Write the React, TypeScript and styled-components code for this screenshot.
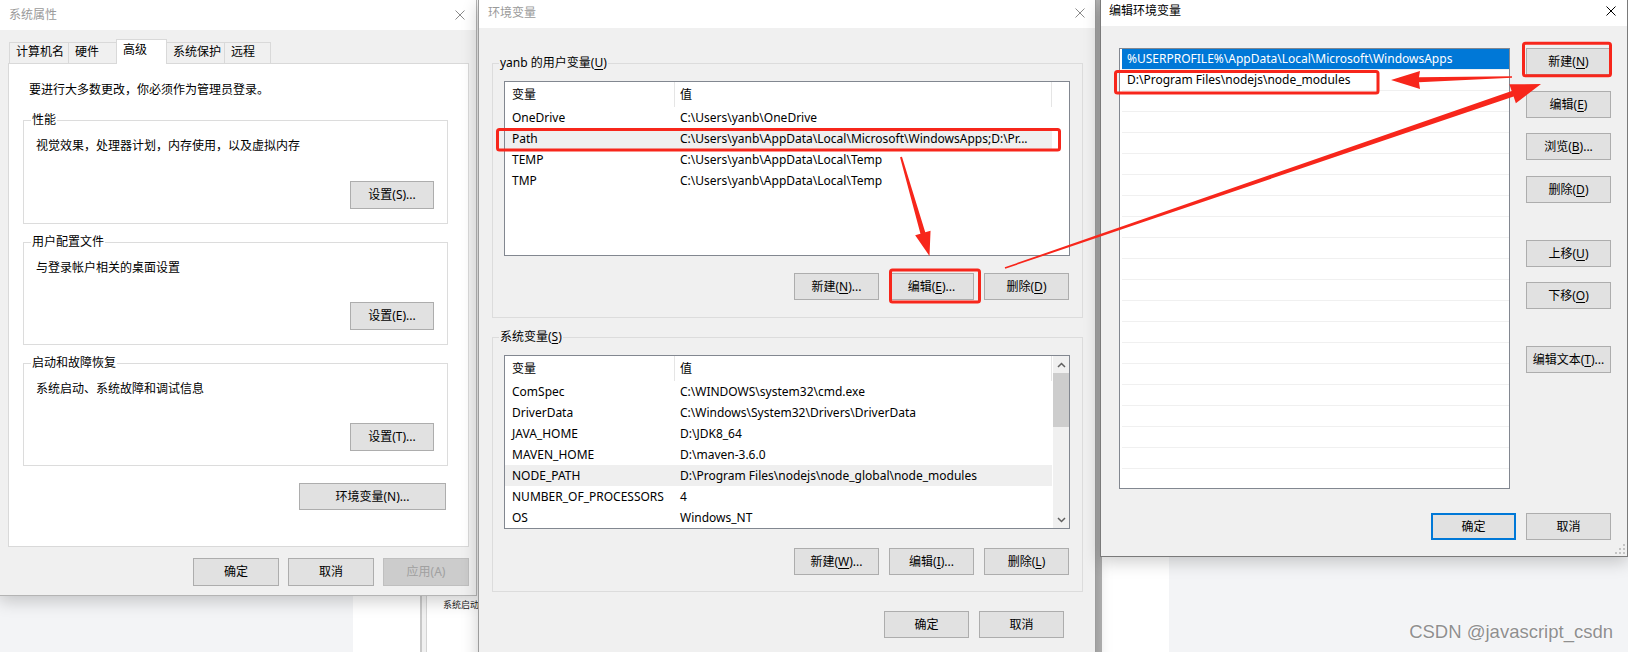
import styled, { createGlobalStyle, css } from 'styled-components';

const RED = '#f7261b';

const GlobalStyle = createGlobalStyle`
    html, body {
        margin: 0;
        padding: 0;
        background: #f3f4f6;
    }
    body {
        font-family: "Noto Sans", "Noto Sans CJK SC", sans-serif;
        font-size: 12px;
        color: #000;
    }
    *, *::before, *::after {
        box-sizing: border-box;
    }
`;

const Desktop = styled.div`
    position: relative;
    width: 1628px;
    height: 652px;
    overflow: hidden;
    background: #f3f4f6;
`;

// window lying behind the dialogs, only its edges show
const BackWindow = styled.div`
    position: absolute;
    left: 353px;
    top: 0;
    width: 816px;
    height: 652px;
    display: flex;
    background: #fff;
`;
const BackPane = styled.div<{ $w: number; $bg: string }>`
    flex: 0 0 ${(p) => p.$w}px;
    background: ${(p) => p.$bg};
`;
const BackContent = styled.div`
    flex: 1;
    display: flex;
    flex-direction: column;
    justify-content: flex-end;
    padding: 0 0 41px 16px;
    font-size: 9px;
    line-height: 12px;
    color: #222;
`;

const Window = styled.div<{ $x: number; $w: number; $h: number; $z: number; $edge: string }>`
    position: absolute;
    top: 0;
    left: ${(p) => p.$x}px;
    width: ${(p) => p.$w}px;
    height: ${(p) => p.$h}px;
    z-index: ${(p) => p.$z};
    display: flex;
    flex-direction: column;
    background: #f0f0f0;
    border: 1px solid ${(p) => p.$edge};
    border-top: none;
    box-shadow: 0 5px 16px rgba(0, 0, 0, 0.2);
`;

const TitleBar = styled.div<{ $h: number; $padL: number; $padR: number; $lift?: number; $active?: boolean }>`
    flex: none;
    height: ${(p) => p.$h}px;
    display: flex;
    align-items: center;
    justify-content: space-between;
    padding: 0 ${(p) => p.$padR}px ${(p) => p.$lift || 0}px ${(p) => p.$padL}px;
    background: #fff;
    color: ${(p) => (p.$active ? '#000' : '#9a9a9a')};
    line-height: 16px;
`;

const Key = styled.span`
    text-decoration: underline;
    text-underline-offset: 2px;
`;

const Btn = styled.button<{ $w: number; $h: number; $mt?: number; $kind?: 'default' | 'disabled' }>`
    flex: none;
    width: ${(p) => p.$w}px;
    height: ${(p) => p.$h}px;
    margin: ${(p) => p.$mt || 0}px 0 0 0;
    padding: 0;
    display: flex;
    align-items: center;
    justify-content: center;
    font: inherit;
    line-height: 16px;
    white-space: nowrap;
    color: #000;
    background: #e1e1e1;
    border: 1px solid #adadad;
    ${(p) =>
        p.$kind === 'default' &&
        css`
            border: 2px solid #0078d7;
        `}
    ${(p) =>
        p.$kind === 'disabled' &&
        css`
            color: #a0a0a0;
            background: #cccccc;
            border-color: #bfbfbf;
        `}
`;

/* ---------- 系统属性 ---------- */

const SysBody = styled.div`
    flex: 1;
    display: flex;
    flex-direction: column;
    padding: 9px 7px 9px 8px;
`;
const TabStrip = styled.div`
    flex: none;
    display: flex;
    align-items: flex-end;
    height: 25px;
    margin: 0 0 -1px 2px;
    position: relative;
    z-index: 1;
`;
const Tab = styled.div<{ $w: number; $on?: boolean }>`
    width: ${(p) => p.$w}px;
    height: ${(p) => (p.$on ? 25 : 22)}px;
    margin-left: -1px;
    padding: ${(p) => (p.$on ? 2 : 1)}px 0 0 6px;
    line-height: 16px;
    background: ${(p) => (p.$on ? '#fff' : '#f0f0f0')};
    border: 1px solid #d9d9d9;
    border-bottom: ${(p) => (p.$on ? 'none' : '1px solid #d9d9d9')};
`;
const TabPanel = styled.div`
    flex: none;
    height: 484px;
    display: flex;
    flex-direction: column;
    padding: 18px 20px 0 14px;
    background: #fff;
    border: 1px solid #d9d9d9;
`;
const Notice = styled.div`
    padding-left: 6px;
    line-height: 16px;
`;
const Group = styled.div<{ $h: number; $mt: number; $pad: string }>`
    flex: none;
    height: ${(p) => p.$h}px;
    margin-top: ${(p) => p.$mt}px;
    display: flex;
    flex-direction: column;
    padding: ${(p) => p.$pad};
    border: 1px solid #dcdcdc;
`;
const Legend = styled.div<{ $bg: string }>`
    align-self: flex-start;
    margin: -9px 0 0 -5px;
    padding: 0 1px;
    line-height: 16px;
    background: ${(p) => p.$bg};
`;
const GroupText = styled.div`
    margin-top: 10px;
    line-height: 16px;
`;
const GroupAction = styled.div`
    margin-top: auto;
    display: flex;
    justify-content: flex-end;
`;
const EnvRow = styled.div`
    margin-top: 17px;
    display: flex;
    justify-content: flex-end;
    padding-right: 2px;
`;
const Footer = styled.div<{ $mt: number; $mr: number; $gap: number }>`
    flex: none;
    margin: ${(p) => p.$mt}px ${(p) => p.$mr}px 0 0;
    display: flex;
    justify-content: flex-end;
    gap: ${(p) => p.$gap}px;
`;

/* ---------- 环境变量 ---------- */

const EnvBody = styled.div`
    flex: 1;
    display: flex;
    flex-direction: column;
    padding: 35px 12px 0 13px;
`;
const ListBox = styled.div<{ $h: number }>`
    flex: none;
    height: ${(p) => p.$h}px;
    margin-top: 10px;
    display: flex;
    overflow: hidden;
    background: #fff;
    border: 1px solid #828790;
`;
const ListMain = styled.div`
    width: 547px;
    display: flex;
    flex-direction: column;
`;
const Row = styled.div<{ $head?: boolean; $hot?: boolean }>`
    flex: none;
    display: flex;
    height: ${(p) => (p.$head ? 25 : 21)}px;
    line-height: ${(p) => (p.$head ? 25 : 21)}px;
    white-space: nowrap;
    background: ${(p) => (p.$hot ? '#efefef' : 'transparent')};
`;
const Cell = styled.div<{ $first?: boolean; $head?: boolean }>`
    ${(p) => (p.$first ? 'flex: 0 0 170px; padding-left: 7px;' : 'flex: 1; padding-left: 5px;')}
    overflow: hidden;
    border-right: 1px solid ${(p) => (p.$head ? '#e5e5e5' : 'transparent')};
`;
const ScrollCol = styled.div<{ $bar?: boolean }>`
    flex: none;
    width: 17px;
    display: flex;
    flex-direction: column;
    background: ${(p) => (p.$bar ? '#f0f0f0' : '#fff')};
    border-left: 1px solid #fff;
`;
const ScrollArrow = styled.div`
    flex: none;
    height: 17px;
    display: flex;
    align-items: center;
    justify-content: center;
`;
const ScrollTrack = styled.div`
    flex: 1;
`;
const ScrollThumb = styled.div`
    height: 54px;
    background: #cdcdcd;
`;
const ButtonRow = styled.div<{ $mt: number }>`
    margin-top: ${(p) => p.$mt}px;
    display: flex;
    justify-content: flex-end;
    gap: 10px;
    padding-right: 1px;
`;

/* ---------- 编辑环境变量 ---------- */

const EditBody = styled.div`
    flex: 1;
    display: flex;
    flex-direction: column;
    padding: 22px 15px 16px 18px;
`;
const EditMain = styled.div`
    display: flex;
    gap: 16px;
`;
const PathList = styled.div`
    flex: none;
    width: 391px;
    height: 441px;
    overflow: hidden;
    padding-left: 2px;
    background: #fff;
    border: 1px solid #828790;
`;
const PathRow = styled.div<{ $sel?: boolean }>`
    height: 21px;
    line-height: 20px;
    padding-left: 5px;
    white-space: nowrap;
    color: ${(p) => (p.$sel ? '#fff' : '#000')};
    background: ${(p) => (p.$sel ? '#0078d7' : 'transparent')};
    border-bottom: 1px solid #f0f0f0;
`;
const SideButtons = styled.div`
    display: flex;
    flex-direction: column;
`;
const Grip = styled.svg`
    position: absolute;
    right: 1px;
    bottom: 1px;
`;

/* ---------- overlays ---------- */

const Annotations = styled.svg`
    position: absolute;
    left: 0;
    top: 0;
    z-index: 4;
    pointer-events: none;
`;
const Watermark = styled.div`
    position: absolute;
    right: 15px;
    top: 620px;
    z-index: 5;
    font-family: "Liberation Sans", Arial, sans-serif;
    font-size: 18.5px;
    line-height: 24px;
    white-space: nowrap;
    color: #8f8f8f;
    text-shadow: 0 0 2px #fff, 0 0 1px #fff;
`;

const CloseGlyph = ({ color }: { color: string }) => (
    <svg width="10" height="10" viewBox="0 0 10 10">
        <path d="M0.5 0.5 L9.5 9.5 M9.5 0.5 L0.5 9.5" stroke={color} strokeWidth="1" />
    </svg>
);

const Chevron = ({ down }: { down?: boolean }) => (
    <svg width="9" height="6" viewBox="0 0 9 6">
        <path d={down ? 'M1 1 L4.5 4.5 L8 1' : 'M1 5 L4.5 1.5 L8 5'} stroke="#606060" strokeWidth="1.5" fill="none" />
    </svg>
);

const tabs = [
    { label: '计算机名', w: 60 },
    { label: '硬件', w: 49 },
    { label: '高级', w: 51, on: true },
    { label: '系统保护', w: 59 },
    { label: '远程', w: 47 },
];

const userVars = [
    { name: 'OneDrive', value: 'C:\\Users\\yanb\\OneDrive' },
    { name: 'Path', value: 'C:\\Users\\yanb\\AppData\\Local\\Microsoft\\WindowsApps;D:\\Pr...', hot: true },
    { name: 'TEMP', value: 'C:\\Users\\yanb\\AppData\\Local\\Temp' },
    { name: 'TMP', value: 'C:\\Users\\yanb\\AppData\\Local\\Temp' },
];

const sysVars = [
    { name: 'ComSpec', value: 'C:\\WINDOWS\\system32\\cmd.exe' },
    { name: 'DriverData', value: 'C:\\Windows\\System32\\Drivers\\DriverData' },
    { name: 'JAVA_HOME', value: 'D:\\JDK8_64' },
    { name: 'MAVEN_HOME', value: 'D:\\maven-3.6.0' },
    { name: 'NODE_PATH', value: 'D:\\Program Files\\nodejs\\node_global\\node_modules', hot: true },
    { name: 'NUMBER_OF_PROCESSORS', value: '4' },
    { name: 'OS', value: 'Windows_NT' },
];

const pathEntries = [
    '%USERPROFILE%\\AppData\\Local\\Microsoft\\WindowsApps',
    'D:\\Program Files\\nodejs\\node_modules',
    ...Array(19).fill(''),
];

type Variable = { name: string; value: string; hot?: boolean };

const VarList = ({ rows, height, scroll }: { rows: Variable[]; height: number; scroll?: boolean }) => (
    <ListBox $h={height}>
        <ListMain>
            <Row $head>
                <Cell $first $head>变量</Cell>
                <Cell $head>值</Cell>
            </Row>
            {rows.map((r) => (
                <Row key={r.name} $hot={r.hot}>
                    <Cell $first>{r.name}</Cell>
                    <Cell>{r.value}</Cell>
                </Row>
            ))}
        </ListMain>
        <ScrollCol $bar={scroll}>
            {scroll && (
                <>
                    <ScrollArrow>
                        <Chevron />
                    </ScrollArrow>
                    <ScrollTrack>
                        <ScrollThumb />
                    </ScrollTrack>
                    <ScrollArrow>
                        <Chevron down />
                    </ScrollArrow>
                </>
            )}
        </ScrollCol>
    </ListBox>
);

export default function App() {
    return (
        <>
            <GlobalStyle />
            <Desktop>
                <BackWindow>
                    <BackPane $w={67} $bg="#fff" />
                    <BackPane $w={2} $bg="#c8c8c8" />
                    <BackPane $w={4} $bg="#f0f0f0" />
                    <BackPane $w={1} $bg="#d4d4d4" />
                    <BackContent>系统启动.</BackContent>
                    <BackPane $w={8} $bg="#b4b4b4" />
                    <BackPane $w={67} $bg="#fff" />
                </BackWindow>

                {/* 系统属性 */}
                <Window $x={-1} $w={478} $h={596} $z={1} $edge="#b4b4b4">
                    <TitleBar $h={30} $padL={9} $padR={11}>
                        <span>系统属性</span>
                        <CloseGlyph color="#8a8a8a" />
                    </TitleBar>
                    <SysBody>
                        <TabStrip>
                            {tabs.map((t) => (
                                <Tab key={t.label} $w={t.w} $on={t.on}>
                                    {t.label}
                                </Tab>
                            ))}
                        </TabStrip>
                        <TabPanel>
                            <Notice>要进行大多数更改，你必须作为管理员登录。</Notice>
                            <Group $h={104} $mt={22} $pad="0 13px 14px 12px">
                                <Legend $bg="#fff">性能</Legend>
                                <GroupText>视觉效果，处理器计划，内存使用，以及虚拟内存</GroupText>
                                <GroupAction>
                                    <Btn $w={84} $h={28}>设置(S)...</Btn>
                                </GroupAction>
                            </Group>
                            <Group $h={103} $mt={18} $pad="0 13px 14px 12px">
                                <Legend $bg="#fff">用户配置文件</Legend>
                                <GroupText>与登录帐户相关的桌面设置</GroupText>
                                <GroupAction>
                                    <Btn $w={84} $h={28}>设置(E)...</Btn>
                                </GroupAction>
                            </Group>
                            <Group $h={103} $mt={18} $pad="0 13px 14px 12px">
                                <Legend $bg="#fff">启动和故障恢复</Legend>
                                <GroupText>系统启动、系统故障和调试信息</GroupText>
                                <GroupAction>
                                    <Btn $w={84} $h={28}>设置(T)...</Btn>
                                </GroupAction>
                            </Group>
                            <EnvRow>
                                <Btn $w={147} $h={27}>环境变量(N)...</Btn>
                            </EnvRow>
                        </TabPanel>
                        <Footer $mt={11} $mr={0} $gap={9}>
                            <Btn $w={86} $h={28}>确定</Btn>
                            <Btn $w={86} $h={28}>取消</Btn>
                            <Btn $w={86} $h={28} $kind="disabled">应用(A)</Btn>
                        </Footer>
                    </SysBody>
                </Window>

                {/* 环境变量 */}
                <Window $x={478} $w={618} $h={700} $z={2} $edge="#9c9c9c">
                    <TitleBar $h={28} $padL={9} $padR={10} $lift={2}>
                        <span>环境变量</span>
                        <CloseGlyph color="#8a8a8a" />
                    </TitleBar>
                    <EnvBody>
                        <Group $h={255} $mt={0} $pad="0 12px 17px 11px">
                            <Legend $bg="#f0f0f0">
                                yanb 的用户变量(<Key>U</Key>)
                            </Legend>
                            <VarList rows={userVars} height={175} />
                            <ButtonRow $mt={17}>
                                <Btn $w={85} $h={27}>
                                    新建(<Key>N</Key>)...
                                </Btn>
                                <Btn $w={85} $h={27}>
                                    编辑(<Key>E</Key>)...
                                </Btn>
                                <Btn $w={85} $h={27}>
                                    删除(<Key>D</Key>)
                                </Btn>
                            </ButtonRow>
                        </Group>
                        <Group $h={255} $mt={19} $pad="0 12px 16px 11px">
                            <Legend $bg="#f0f0f0">
                                系统变量(<Key>S</Key>)
                            </Legend>
                            <VarList rows={sysVars} height={174} scroll />
                            <ButtonRow $mt={19}>
                                <Btn $w={85} $h={27}>
                                    新建(<Key>W</Key>)...
                                </Btn>
                                <Btn $w={85} $h={27}>
                                    编辑(<Key>I</Key>)...
                                </Btn>
                                <Btn $w={85} $h={27}>
                                    删除(<Key>L</Key>)
                                </Btn>
                            </ButtonRow>
                        </Group>
                        <Footer $mt={19} $mr={19} $gap={10}>
                            <Btn $w={85} $h={27}>确定</Btn>
                            <Btn $w={85} $h={27}>取消</Btn>
                        </Footer>
                    </EnvBody>
                </Window>

                {/* 编辑环境变量 */}
                <Window $x={1100} $w={528} $h={557} $z={3} $edge="#7a7a7a">
                    <TitleBar $h={26} $padL={8} $padR={11} $lift={4} $active>
                        <span>编辑环境变量</span>
                        <CloseGlyph color="#000" />
                    </TitleBar>
                    <EditBody>
                        <EditMain>
                            <PathList>
                                {pathEntries.map((p, i) => (
                                    <PathRow key={i} $sel={i === 0}>
                                        {p}
                                    </PathRow>
                                ))}
                            </PathList>
                            <SideButtons>
                                <Btn $w={85} $h={27}>
                                    新建(<Key>N</Key>)
                                </Btn>
                                <Btn $w={85} $h={27} $mt={16}>
                                    编辑(<Key>E</Key>)
                                </Btn>
                                <Btn $w={85} $h={27} $mt={15}>
                                    浏览(<Key>B</Key>)...
                                </Btn>
                                <Btn $w={85} $h={27} $mt={16}>
                                    删除(<Key>D</Key>)
                                </Btn>
                                <Btn $w={85} $h={27} $mt={37}>
                                    上移(<Key>U</Key>)
                                </Btn>
                                <Btn $w={85} $h={27} $mt={15}>
                                    下移(<Key>O</Key>)
                                </Btn>
                                <Btn $w={85} $h={27} $mt={37}>
                                    编辑文本(<Key>T</Key>)...
                                </Btn>
                            </SideButtons>
                        </EditMain>
                        <Footer $mt={24} $mr={1} $gap={10}>
                            <Btn $w={85} $h={27} $kind="default">确定</Btn>
                            <Btn $w={85} $h={27}>取消</Btn>
                        </Footer>
                    </EditBody>
                    <Grip width="12" height="12" viewBox="0 0 12 12">
                        {[
                            [9, 9],
                            [5, 9],
                            [1, 9],
                            [9, 5],
                            [5, 5],
                            [9, 1],
                        ].map(([x, y]) => (
                            <rect key={`${x}-${y}`} x={x} y={y} width="2" height="2" fill="#c4c4c4" />
                        ))}
                    </Grip>
                </Window>

                <Annotations width="1628" height="652" viewBox="0 0 1628 652">
                    <g fill="none" stroke={RED} strokeWidth="3">
                        <rect x="497.5" y="129.5" width="562" height="20.5" rx="2" />
                        <rect x="890.5" y="270" width="89" height="32" rx="2" />
                        <rect x="1523.5" y="43.2" width="87" height="32.5" rx="2" />
                        <rect x="1115.5" y="71.5" width="262.5" height="21.5" rx="2" />
                    </g>
                    <g fill={RED}>
                        <polygon points="900.04,157.28 920.45,233.63 915.16,235.16 929.5,256 930.54,230.72 925.25,232.25 901.96,156.72" />
                        <polygon points="1005.26,268.76 1513.6,96.59 1515.87,103.21 1541,84 1509.37,84.29 1511.65,90.91 1004.74,267.24" />
                        <polygon points="1512,76.3 1419,77.3 1420,71 1391,80 1420,89 1419,82.3 1512,77.7" />
                    </g>
                </Annotations>

                <Watermark>CSDN @javascript_csdn</Watermark>
            </Desktop>
        </>
    );
}
